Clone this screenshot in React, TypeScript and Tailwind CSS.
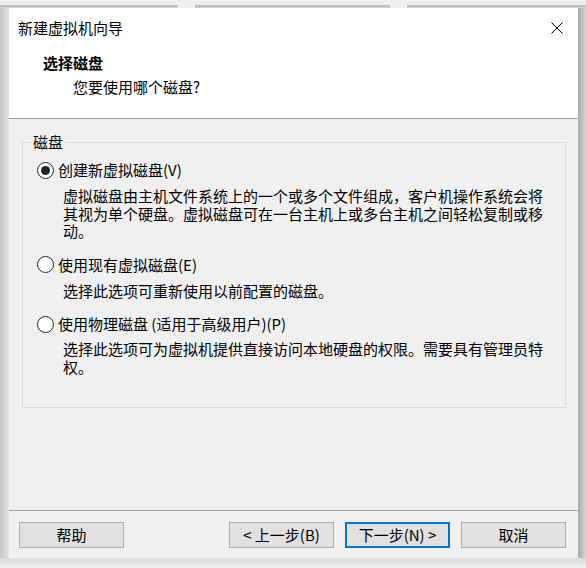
import React from "react";

const font = { fontFamily: '"Noto Sans CJK SC", "Noto Sans", sans-serif' };

function Radio({ checked, label }: { checked?: boolean; label: string }) {
  return (
    <div className="flex items-center h-[20px]">
      <span className="w-[17px] h-[17px] rounded-full border border-[#222222] bg-white flex items-center justify-center">
        {checked && <span className="w-[9px] h-[9px] rounded-full bg-[#222222]" />}
      </span>
      <span className="ml-[4px] text-[15px] leading-[20px] text-black">{label}</span>
    </div>
  );
}

function Btn({ children, primary }: { children: React.ReactNode; primary?: boolean }) {
  return (
    <div
      className={
        "w-[105px] h-[26px] flex items-center justify-center bg-[#e1e1e1] text-[15px] leading-[20px] text-black " +
        (primary ? "border-2 border-[#0078d7]" : "border border-[#adadad]")
      }
    >
      {children}
    </div>
  );
}

export default function App() {
  return (
    <div className="w-[586px] h-[568px] bg-[#efefef] flex flex-col overflow-hidden" style={font}>
      {/* top strip with background tabs */}
      <div className="h-[8px] flex items-end">
        <div className="w-[178px] h-[3px] bg-gradient-to-b from-[#b9b9b9] to-[#d0d0d0]" />
        <div className="w-[17px] h-[3px]" />
        <div className="w-[195px] h-[3px] bg-gradient-to-b from-[#b9b9b9] to-[#d0d0d0]" />
        <div className="w-[17px] h-[3px]" />
        <div className="flex-1 h-[3px] bg-gradient-to-b from-[#b9b9b9] to-[#d0d0d0]" />
      </div>
      <div className="flex h-[550px]">
        <div className="w-[9px] bg-gradient-to-r from-[#c6c6c6] to-[#e4e4e4]" />
        {/* window */}
        <div className="w-[569px] h-[550px] bg-[#f0f0f0] flex flex-col">
          {/* header */}
          <div className="h-[111px] bg-white border-b border-[#a0a0a0] flex flex-col">
            <div className="h-[39px] flex items-center justify-between pl-[9px] pr-[15px]">
              <span className="text-[15px] leading-[20px] text-black">新建虚拟机向导</span>
              <svg width="12" height="12" viewBox="0 0 12 12">
                <path d="M0.5 0.5 L11.5 11.5 M11.5 0.5 L0.5 11.5" stroke="#000" strokeWidth="1" />
              </svg>
            </div>
            <div className="mt-[6px] pl-[34px] text-[15px] leading-[20px] font-bold text-black">选择磁盘</div>
            <div className="mt-[4px] pl-[64px] text-[15px] leading-[20px] text-black">您要使用哪个磁盘?</div>
          </div>
          {/* body */}
          <div className="flex-1 pt-[23px] pl-[13px]">
            <div className="relative w-[544px] h-[266px] border border-[#dcdcdc]">
              <span className="absolute left-[8px] top-[-11px] px-[2px] bg-[#f0f0f0] text-[15px] leading-[20px] text-black">
                磁盘
              </span>
              <div className="pl-[14px] pt-[17px] flex flex-col">
                <Radio checked label="创建新虚拟磁盘(V)" />
                <div className="mt-[7px] ml-[26px] w-[486px] text-[15px] leading-[17.5px] text-black">
                  虚拟磁盘由主机文件系统上的一个或多个文件组成，客户机操作系统会将其视为单个硬盘。虚拟磁盘可在一台主机上或多台主机之间轻松复制或移动。
                </div>
                <div className="mt-[15px]">
                  <Radio label="使用现有虚拟磁盘(E)" />
                </div>
                <div className="mt-[7px] ml-[26px] w-[486px] text-[15px] leading-[17.5px] text-black">
                  选择此选项可重新使用以前配置的磁盘。
                </div>
                <div className="mt-[15px]">
                  <Radio label="使用物理磁盘 (适用于高级用户)(P)" />
                </div>
                <div className="mt-[6px] ml-[26px] w-[486px] text-[15px] leading-[18px] text-black">
                  选择此选项可为虚拟机提供直接访问本地硬盘的权限。需要具有管理员特权。
                </div>
              </div>
            </div>
          </div>
          {/* footer */}
          <div className="h-[48px] border-t border-[#a0a0a0] pt-[11px] pl-[10px] pr-[12px] flex items-start justify-between">
            <Btn>帮助</Btn>
            <div className="flex gap-[11px]">
              <Btn>&lt; 上一步(B)</Btn>
              <Btn primary>下一步(N) &gt;</Btn>
              <Btn>取消</Btn>
            </div>
          </div>
        </div>
        <div className="flex-1 bg-gradient-to-r from-[#a9a9a9] to-[#d6d6d6]" />
      </div>
      <div className="flex-1 bg-gradient-to-b from-[#dcdcdc] to-[#f2f2f2]" />
    </div>
  );
}
